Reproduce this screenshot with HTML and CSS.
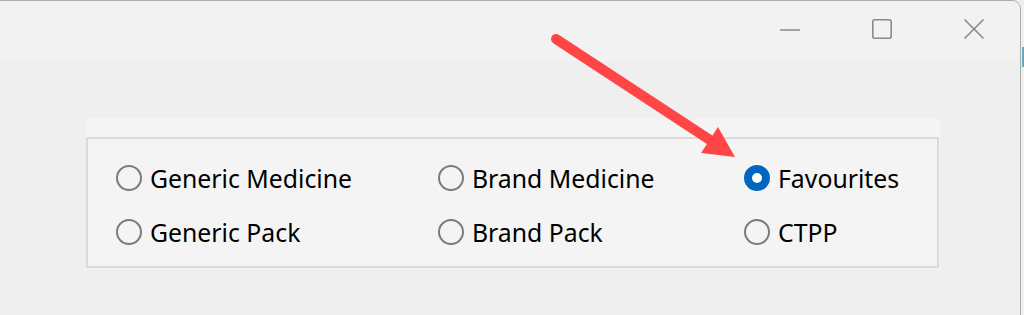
FILE: index.html
```html
<!DOCTYPE html>
<html>
<head>
<meta charset="utf-8">
<link rel="stylesheet" href="styles.css">
</head>
<body>
<div class="window">
  <div class="titlebar">
    <div class="caption-btn">
      <svg width="22" height="22" viewBox="0 0 22 22"><line x1="1" y1="12" x2="21" y2="12" stroke="#8a8a8a" stroke-width="1.6"/></svg>
    </div>
    <div class="caption-btn">
      <svg width="22" height="22" viewBox="0 0 22 22"><rect x="1.8" y="1.8" width="18.4" height="18.4" rx="2" fill="none" stroke="#8a8a8a" stroke-width="1.6"/></svg>
    </div>
    <div class="caption-btn">
      <svg width="22" height="22" viewBox="0 0 22 22"><path d="M1.5 1.5 L20.5 20.5 M20.5 1.5 L1.5 20.5" stroke="#8a8a8a" stroke-width="1.6" fill="none"/></svg>
    </div>
  </div>
  <div class="content">
    <div class="panel">
      <div class="groupbox">
        <label class="radio"><span class="dot"></span><span class="label">Generic Medicine</span></label>
        <label class="radio"><span class="dot"></span><span class="label">Brand Medicine</span></label>
        <label class="radio"><span class="dot checked"></span><span class="label">Favourites</span></label>
        <label class="radio"><span class="dot"></span><span class="label">Generic Pack</span></label>
        <label class="radio"><span class="dot"></span><span class="label">Brand Pack</span></label>
        <label class="radio"><span class="dot"></span><span class="label">CTPP</span></label>
      </div>
    </div>
  </div>
</div>
<div class="edge-accent"></div>
<svg class="arrow" width="1024" height="315" viewBox="0 0 1024 315">
  <line x1="556" y1="39" x2="710" y2="140" stroke="#ff4545" stroke-width="10" stroke-linecap="round"/>
  <polygon points="701,153 718,127 735,157" fill="#ff4545"/>
</svg>
</body>
</html>
```
FILE: styles.css
```css
html, body {
  margin: 0;
  padding: 0;
}
body {
  width: 1024px;
  height: 315px;
  background: #f0f0f0;
  position: relative;
  overflow: hidden;
  font-family: "Segoe UI", "Noto Sans", "Open Sans", sans-serif;
}
.window {
  width: 1021px;
  height: 315px;
  border-top: 1px solid #ababab;
  border-right: 1px solid #ababab;
  border-top-right-radius: 9px;
  background: #efefef;
  box-sizing: border-box;
  overflow: hidden;
}
.titlebar {
  height: 60px;
  background: #f2f2f2;
  display: flex;
  justify-content: flex-end;
  align-items: flex-start;
  padding-top: 17px;
  padding-right: 35px;
  box-sizing: border-box;
  gap: 70px;
}
.caption-btn {
  width: 22px;
  height: 22px;
}
.caption-btn svg {
  display: block;
}
.content {
  padding-top: 58px;
  padding-left: 86px;
}
.panel {
  width: 854px;
  height: 150px;
  background: #f4f4f4;
  padding-top: 18px;
  padding-right: 1px;
  padding-bottom: 1px;
  box-sizing: border-box;
}
.groupbox {
  height: 131px;
  border: 2px solid #dadada;
  box-sizing: border-box;
  padding: 12px 0 0 28px;
  display: grid;
  grid-template-columns: 322px 306px 1fr;
  grid-auto-rows: 54px;
  align-items: center;
}
.radio {
  display: flex;
  align-items: center;
  gap: 8px;
  font-size: 24.8px;
  color: #000;
}
.dot {
  width: 26px;
  height: 26px;
  border-radius: 50%;
  border: 2px solid #7b7b7b;
  box-sizing: border-box;
  flex: none;
}
.dot.checked {
  border: 8px solid #0067c0;
  background: #fff;
}
.label {
  line-height: 30px;
}
.edge-accent {
  position: absolute;
  left: 1022px;
  top: 47px;
  width: 2px;
  height: 20px;
  background: #6aa6c0;
}
.arrow {
  position: absolute;
  left: 0;
  top: 0;
  pointer-events: none;
}
```
